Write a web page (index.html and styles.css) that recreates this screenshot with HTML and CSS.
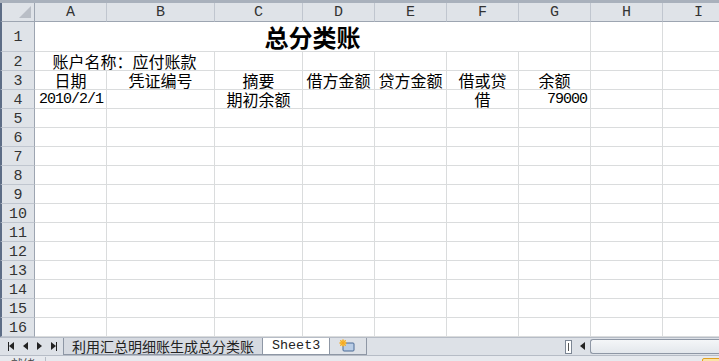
FILE: index.html
```html
<!DOCTYPE html>
<html lang="zh-CN">
<head>
    <meta charset="UTF-8">
    <title>总分类账 - Excel</title>
    <link rel="stylesheet" href="styles.css">
</head>
<body>
    <div class="topline"></div>

    <div class="sheet top-rows">
        <!-- column headers -->
        <div class="corner"><span class="tri"></span></div>
        <div class="colhead">A</div>
        <div class="colhead">B</div>
        <div class="colhead">C</div>
        <div class="colhead">D</div>
        <div class="colhead">E</div>
        <div class="colhead">F</div>
        <div class="colhead">G</div>
        <div class="colhead">H</div>
        <div class="colhead">I</div>

        <!-- row 1 -->
        <div class="rowhead">1</div>
        <div class="cell title span7">总分类账</div>
        <div class="cell"></div>
        <div class="cell"></div>

        <!-- row 2 -->
        <div class="rowhead">2</div>
        <div class="cell center span2">账户名称：应付账款</div>
        <div class="cell"></div><div class="cell"></div><div class="cell"></div>
        <div class="cell"></div><div class="cell"></div><div class="cell"></div><div class="cell"></div>

        <!-- row 3 -->
        <div class="rowhead">3</div>
        <div class="cell center">日期</div>
        <div class="cell center">凭证编号</div>
        <div class="cell center">摘要</div>
        <div class="cell center">借方金额</div>
        <div class="cell center">贷方金额</div>
        <div class="cell center">借或贷</div>
        <div class="cell center">余额</div>
        <div class="cell"></div><div class="cell"></div>

        <!-- row 4 -->
        <div class="rowhead">4</div>
        <div class="cell right num">2010/2/1</div>
        <div class="cell"></div>
        <div class="cell center">期初余额</div>
        <div class="cell"></div>
        <div class="cell"></div>
        <div class="cell center">借</div>
        <div class="cell right num">79000</div>
        <div class="cell"></div><div class="cell"></div>
    </div>

    <div class="sheet" id="emptyRows"></div>

    <div class="tabbar">
        <div class="navbtns">
            <span class="nav first"></span>
            <span class="nav prev"></span>
            <span class="nav next"></span>
            <span class="nav last"></span>
        </div>
        <div class="tab">利用汇总明细账生成总分类账</div>
        <div class="tab active">Sheet3</div>
        <div class="tab newtab">
            <svg width="18" height="14" viewBox="0 0 18 14">
                <rect x="5" y="4" width="11" height="8" rx="1" fill="#b9cde6" stroke="#4a6a96"/>
                <circle cx="5" cy="4" r="3" fill="#f6c343"/>
                <path d="M5 0v8M1 4h8M2 1l6 6M8 1l-6 6" stroke="#f6a623" stroke-width="0.8"/>
            </svg>
        </div>
        <div class="tabfill"></div>
        <div class="split"><span></span></div>
        <div class="arrow-left"></div>
        <div class="hscroll"></div>
    </div>

    <div class="status">
        <span class="ready">就绪</span>
        <span class="status-btn"></span>
    </div>

    <script>
        // rows 5..16 are empty, build them instead of writing them out
        const emptyRows = document.getElementById('emptyRows');
        for (let r = 5; r <= 16; r++) {
            const head = document.createElement('div');
            head.className = 'rowhead';
            head.textContent = r;
            emptyRows.appendChild(head);
            for (let c = 0; c < 9; c++) {
                const cell = document.createElement('div');
                cell.className = 'cell';
                emptyRows.appendChild(cell);
            }
        }
    </script>
</body>
</html>
```

FILE: styles.css
```css
body {
    margin: 0;
    width: 719px;
    height: 361px;
    overflow: hidden;
    background: #fff;
    font-family: "Noto Sans CJK SC", sans-serif;
    color: #000;
}
.topline {
    height: 3px;
    background: #a9b1bc;
}
.sheet {
    display: grid;
    grid-template-columns: 35px 72px 108px 88px 72px 72px 72px 72px 72px 72px;
    grid-auto-rows: 19px;
}
.sheet.top-rows {
    grid-template-rows: 19px 30px 19px 19px 19px;
}
.corner, .colhead, .rowhead {
    box-sizing: border-box;
    background: #dfe3e8;
    color: #333;
    font-family: "Liberation Mono", monospace;
    font-size: 15px;
    display: flex;
    align-items: center;
    justify-content: center;
}
.corner {
    position: relative;
    border-left: 2px solid #5d6d86;
    border-right: 1px solid #9da5b1;
    border-bottom: 1px solid #9da5b1;
}
.tri {
    position: absolute;
    right: 3px;
    bottom: 3px;
    width: 0;
    height: 0;
    border-left: 12px solid transparent;
    border-bottom: 12px solid #b9bec6;
}
.colhead {
    border-right: 1px solid #c0c6cf;
    border-bottom: 1px solid #9da5b1;
    padding-top: 1px;
}
.rowhead {
    border-left: 2px solid #5d6d86;
    border-right: 1px solid #9da5b1;
    border-bottom: 1px solid #c0c6cf;
    padding-top: 2px;
}
.cell {
    box-sizing: border-box;
    border-right: 1px solid #dadcdd;
    border-bottom: 1px solid #dadcdd;
    font-size: 16px;
    line-height: 17px;
    white-space: nowrap;
    overflow: hidden;
    display: flex;
    align-items: flex-end;
    padding: 0 2px;
}
.center {
    justify-content: center;
}
.right {
    justify-content: flex-end;
}
.num {
    font-family: "Liberation Mono", monospace;
    font-size: 15px;
    letter-spacing: -1px;
    padding-right: 3px;
}
.span2 {
    grid-column: span 2;
}
.span7 {
    grid-column: span 7;
}
.title {
    justify-content: center;
    font-size: 24px;
    font-weight: bold;
    line-height: 28px;
}
.tabbar {
    display: flex;
    height: 18px;
    background: #dde1e7;
    border-top: 1px solid #b6bcc6;
    box-sizing: border-box;
    align-items: stretch;
}
.navbtns {
    display: flex;
    align-items: center;
    width: 63px;
    padding-left: 5px;
    box-sizing: border-box;
}
.nav {
    width: 14px;
    height: 9px;
    position: relative;
}
.nav::before {
    content: "";
    position: absolute;
    top: 0;
    left: 4px;
    border-top: 4.5px solid transparent;
    border-bottom: 4.5px solid transparent;
}
.prev::before, .first::before {
    border-right: 5px solid #222;
}
.next::before, .last::before {
    border-left: 5px solid #222;
}
.first::after, .last::after {
    content: "";
    position: absolute;
    top: 0;
    width: 1px;
    height: 9px;
    background: #222;
}
.first::after {
    left: 3px;
}
.last::after {
    left: 9px;
}
.tab {
    font-size: 14px;
    line-height: 16px;
    padding: 0 8px;
    background: #d6dae1;
    border: 1px solid #8e97a5;
    border-top: 0;
    color: #222;
    display: flex;
    align-items: center;
}
.tab.active {
    background: #fff;
    font-family: "Liberation Mono", monospace;
    font-size: 13.4px;
    padding: 0 9px;
    border-left: 0;
}
.tab.newtab {
    background: #dde1e7;
    padding: 0 10px 0 8px;
    border-left: 0;
}
.tabfill {
    flex: 1;
}
.split {
    width: 7px;
    margin: 2px 4px 1px 0;
    background: #fff;
    border: 1px solid #7c8694;
    box-sizing: border-box;
    display: flex;
    justify-content: center;
    align-items: center;
}
.split span {
    width: 1px;
    height: 8px;
    background: #555;
}
.arrow-left {
    width: 14px;
    position: relative;
}
.arrow-left::before {
    content: "";
    position: absolute;
    top: 4px;
    left: 4px;
    border-top: 4.5px solid transparent;
    border-bottom: 4.5px solid transparent;
    border-right: 5px solid #222;
}
.hscroll {
    width: 128px;
    margin: 1px 0;
    background: linear-gradient(#f4f6f8, #e3e7ec);
    border: 1px solid #8e97a5;
    border-right: 0;
    border-radius: 3px 0 0 3px;
}
.status {
    height: 6px;
    background: #e6e9ee;
    border-top: 1px solid #b6bcc6;
    position: relative;
    font-size: 12px;
}
.ready {
    position: absolute;
    left: 11px;
    top: 1px;
    color: #444;
    line-height: 14px;
    padding-right: 10px;
    border-right: 1px solid #b6bcc6;
}
.status-btn {
    position: absolute;
    left: 702px;
    top: 2px;
    width: 17px;
    height: 10px;
    border: 1px solid #e0a020;
    border-radius: 2px;
    background: #fbe3a6;
}
```
